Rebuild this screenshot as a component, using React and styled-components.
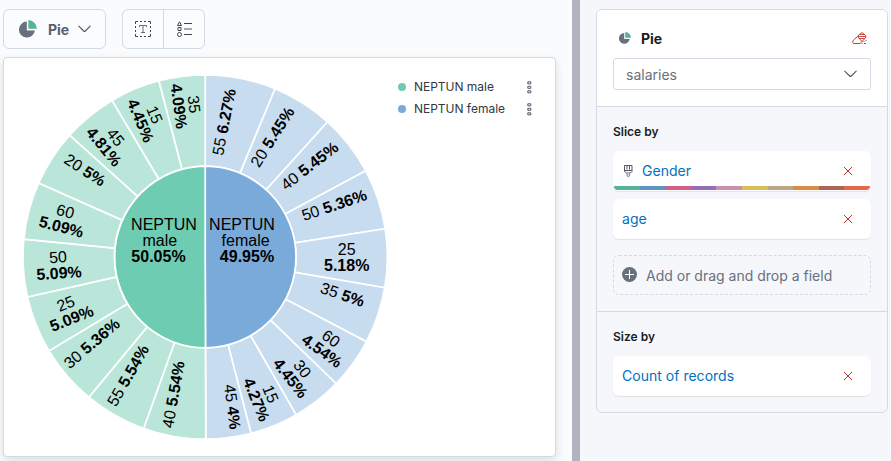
import React from 'react';
import styled, { createGlobalStyle } from 'styled-components';

const GlobalStyle = createGlobalStyle`
  * { box-sizing: border-box; }
  body { margin: 0; overflow: hidden; font-family: Inter, 'Liberation Sans', sans-serif; color: #343741; background: #fafbfd; }
  button { font: inherit; color: inherit; padding: 0; border: 0; background: none; }
  svg { display: block; flex: none; }
`;

const Page = styled.div`
  display: flex;
  width: 891px;
  height: 461px;
  overflow: hidden;
`;
const Workspace = styled.main`
  width: 572px;
  padding: 9px 0 0 3px;
  display: flex;
  flex-direction: column;
  gap: 8px;
  background: #fafbfd;
`;
const Divider = styled.div`
  width: 8px;
  background: #b0b4be;
`;
const Toolbar = styled.div`
  display: flex;
  gap: 16px;
  height: 40px;
`;
const ChartSwitch = styled.button`
  display: flex;
  align-items: center;
  width: 103px;
  height: 40px;
  padding: 0 14px 0 15px;
  border: 1px solid #d3dae6;
  border-radius: 6px;
  background: #fbfcfd;
  font-size: 14px;
  font-weight: 700;
  color: #5a606b;
  span { margin: 1px 9px 0 11px; width: 22px; text-align: left; }
`;
const ButtonGroup = styled.div`
  display: flex;
  width: 83px;
  height: 40px;
  border: 1px solid #d3dae6;
  border-radius: 6px;
  background: #fbfcfd;
`;
const IconButton = styled.button`
  flex: 1;
  display: flex;
  align-items: center;
  justify-content: center;
  & + & { border-left: 1px solid #d3dae6; }
`;
const ChartCard = styled.section`
  display: flex;
  width: 553px;
  height: 400px;
  border: 1px solid #d3dae6;
  border-radius: 4px;
  background: #fff;
  box-shadow: 0 3px 8px rgba(0, 0, 0, 0.07), 0 6px 14px rgba(0, 0, 0, 0.05);
`;
const Legend = styled.ul`
  list-style: none;
  margin: 18px 0 0 4px;
  padding: 0;
  width: 140px;
`;
const LegendItem = styled.li`
  display: flex;
  align-items: center;
  height: 22px;
  font-size: 12px;
  line-height: 22px;
  white-space: nowrap;
  letter-spacing: -0.02px;
  i { width: 8px; height: 8px; border-radius: 50%; background: ${(p) => p.$color}; margin-right: 8px; }
  span { width: 113px; }
`;
const Sidebar = styled.aside`
  width: 311px;
  padding: 9px 3px 0 16px;
  background: #f5f7fb;
`;
const Panel = styled.div`
  height: 404px;
  border: 1px solid #d3dae6;
  border-radius: 6px;
  overflow: hidden;
`;
const PanelHead = styled.header`
  height: 97px;
  padding: 18px 16px 0;
  background: #fff;
  border-bottom: 1px solid #d3dae6;
`;
const PanelTitle = styled.div`
  display: flex;
  align-items: center;
  height: 20px;
  padding: 0 4px 0 6px;
  margin-bottom: 10px;
  font-size: 14px;
  font-weight: 700;
  color: #1a1c21;
  span { flex: 1; margin: 1px 0 0 10px; }
`;
const Select = styled.button`
  display: flex;
  align-items: center;
  justify-content: space-between;
  width: 258px;
  height: 32px;
  padding: 0 13px 0 12px;
  border: 1px solid #d3dae6;
  border-radius: 3px;
  font-size: 14px;
  color: #69707d;
  span { margin-top: 1px; }
`;
const Section = styled.section`
  height: ${(p) => p.$height}px;
  padding: 17px 16px 0;
  & + & { border-top: 1px solid #d3dae6; }
`;
const SectionTitle = styled.h3`
  margin: 0 0 11px;
  font-size: 12px;
  font-weight: 600;
  line-height: 16px;
  color: #1a1c21;
`;
const Field = styled.div`
  display: flex;
  flex-direction: column;
  width: 258px;
  height: 40px;
  margin-bottom: 8px;
  border-radius: 6px;
  background: #fff;
  overflow: hidden;
  box-shadow: 0 1px 1px rgba(0, 0, 0, 0.09);
`;
const FieldBody = styled.div`
  display: flex;
  align-items: center;
  flex: 0 0 40px;
  padding: 0 18px 0 9px;
  font-size: 14px;
  line-height: 20px;
  letter-spacing: 0.02px;
  color: #0071c2;
  span { flex: 1; padding-bottom: 1px; }
`;
const FieldIcon = styled.div`
  width: 20px;
  padding-left: 2px;
`;
const Palette = styled.div`
  display: flex;
  height: 4px;
  margin: -5px 1px 0;
  border-radius: 0 0 5px 5px;
  overflow: hidden;
  flex: none;
`;
const Swatch = styled.i`
  flex: 1;
  background: ${(p) => p.$color};
`;
const DropZone = styled.button`
  display: flex;
  align-items: center;
  width: 258px;
  height: 40px;
  margin-top: 16px;
  padding-left: 8px;
  border: 1px dashed #d3dae6;
  border-radius: 6px;
  font-size: 14px;
  color: #69707d;
  svg { margin-bottom: 2px; }
  span { margin: 1px 0 0 9px; }
`;
const SliceLabel = styled.text`
  font-family: 'Liberation Sans', Arial, sans-serif;
  font-size: 16px;
  fill: #000;
  text-anchor: middle;
  tspan.value { font-weight: 700; }
`;

const CX = 205.2;
const CY = 257;
const INNER = 90.8;
const OUTER = 182.2;

const groups = [
  {
    name: 'NEPTUN', sub: 'female', value: '49.95%', total: 49.95, color: '#79aad9', light: '#c8dcef', x: 242,
    slices: [
      ['55', 6.27, -78.7, 224, 122], ['20', 5.45, -57.6, 272.3, 137], ['40', 5.45, -38, 309.5, 165.8],
      ['50', 5.36, -18.5, 334.2, 205], ['25', 5.18, 0, 346.7, 257.6, 1], ['35', 5, 18.8, 342.5, 294.5],
      ['60', 4.54, 35.9, 326.5, 344.6, 1], ['30', 4.45, 52.1, 296.5, 373.5, 1], ['15', 4.27, 67.8, 263.6, 396.8, 1],
      ['45', 4, 82.7, 232.5, 406.7],
    ],
  },
  {
    name: 'NEPTUN', sub: 'male', value: '50.05%', total: 50.05, color: '#6dccb1', light: '#bae6d9', x: 164,
    slices: [
      ['40', 5.54, -80.2, 173.3, 394.6], ['55', 5.54, -60.2, 128, 375.4], ['30', 5.36, -40.6, 91.7, 343.3],
      ['25', 5.09, -21.8, 68.6, 311, 1], ['50', 5.09, -3.5, 58.5, 265, 1], ['60', 5.09, 14.8, 63.3, 219, 1],
      ['20', 5, 33, 85, 170], ['45', 4.81, 50.6, 109.8, 141.9, 1], ['15', 4.45, 67.3, 147.6, 117.6, 1],
      ['35', 4.09, 82.6, 186.6, 105.2, 1],
    ],
  },
];

const point = (r, deg) => {
  const a = (deg * Math.PI) / 180;
  return `${CX + r * Math.sin(a)} ${CY - r * Math.cos(a)}`;
};
const ring = (r0, r1, a0, a1) =>
  `M${point(r0, a0)} L${point(r1, a0)} A${r1} ${r1} 0 0 1 ${point(r1, a1)} L${point(r0, a1)} A${r0} ${r0} 0 0 0 ${point(r0, a0)}Z`;
const wedge = (r, a0, a1) => `M${CX} ${CY} L${point(r, a0)} A${r} ${r} 0 0 1 ${point(r, a1)}Z`;

function PieChart() {
  const shapes = [];
  const labels = [];
  let start = 0;
  groups.forEach((g) => {
    const groupSpan = g.total * 3.6;
    let a = start;
    const sum = g.slices.reduce((t, s) => t + s[1], 0);
    g.slices.forEach(([age, pct, rot, x, y, stacked]) => {
      const end = a + (pct / sum) * groupSpan;
      const key = g.sub + age;
      const gap = rot > 20 ? 15.2 : 16;
      shapes.push(<path key={key} d={ring(INNER, OUTER, a, end)} fill={g.light} />);
      labels.push(
        <SliceLabel key={key} transform={`translate(${x} ${y}) rotate(${rot})`}>
          {stacked ? (
            <>
              <tspan x="0" y={5.6 - gap / 2}>{age}</tspan>
              <tspan x="0" y={5.6 + gap / 2} className="value">{pct}%</tspan>
            </>
          ) : (
            <>
              <tspan x="0" y="5.6">{age} </tspan>
              <tspan className="value">{pct}%</tspan>
            </>
          )}
        </SliceLabel>
      );
      a = end;
    });
    shapes.push(<path key={g.sub} d={wedge(INNER, start, start + groupSpan)} fill={g.color} />);
    labels.push(
      <SliceLabel key={g.sub}>
        <tspan x={g.x} y="230">{g.name}</tspan>
        <tspan x={g.sub === 'male' ? 159.8 : 245.6} y="246">{g.sub}</tspan>
        <tspan x={g.sub === 'male' ? 158.5 : 247} y="262" className="value">{g.value}</tspan>
      </SliceLabel>
    );
    start += groupSpan;
  });
  return (
    <svg width="390" height="398" viewBox="4 58 390 398" role="img" aria-label="Pie chart">
      <g stroke="#fff" strokeWidth="1.7">{shapes}</g>
      {labels}
    </svg>
  );
}

const PieIcon = ({ size }) => (
  <svg width={size} height={size} viewBox="0 0 18 18">
    <path d="M7.8 1.6a8 8 0 1 0 8.1 9H7.8Z" fill="#69707d" />
    <path d="M9.4 0a8.6 8.6 0 0 1 8.4 8.8H9.4Z" fill="#54b399" />
  </svg>
);
const Chevron = () => (
  <svg width="13" height="8" viewBox="0 0 13 8" fill="none" stroke="#535966" strokeWidth="1.1" strokeLinecap="round">
    <path d="M.8 1.1 5.7 6q.8.8 1.6 0l4.9-4.9" />
  </svg>
);
const TextIcon = () => (
  <svg width="16" height="16" viewBox="0 0 16 16" fill="none" stroke="#404651">
    <path d="M.5 3V.5H3M5 .5h2M9 .5h2M13 .5h2.5V3M15.5 5v2M15.5 9v2M15.5 13v2.500H13M11 15.500H9M7 15.500H5M3 15.500H.5V13M.5 11V9M.5 7V5" />
    <path d="M4.500 6V4.500h7V6M8 4.500v7M6 11.500h4" stroke="#69707d" />
  </svg>
);
const ListIcon = () => (
  <svg width="17" height="16" viewBox="0 0 17 16" fill="none" stroke="#404651">
    <path d="M3.500.8 5.500 4.500h-4ZM2 6.500h3v3H2Z" />
    <circle cx="3.500" cy="13.500" r="2" />
    <path d="M8 2.500h8M8 13.500h8" />
    <path d="M8 8h8" strokeWidth="2" stroke="#a5abb3" />
  </svg>
);
const MenuDots = () => (
  <svg width="5" height="13" viewBox="0 0 5 13" fill="none" stroke="#535966">
    <path d="M.8.8h3v2h-3ZM.8 5.300h3v2h-3ZM.8 9.800h3v2h-3Z" />
  </svg>
);
const EraserIcon = () => (
  <svg width="15" height="13" viewBox="0 0 15 13" fill="none" stroke="#bd271e" strokeWidth=".9">
    <path d="M5.500 4.500 1.300 8.300Q-.4 10.500 1.500 11.500H8L10 9.500M5.500 4.500 8.300 1.500Q9.800 0 11.300 1.300L13.500 3.700Q14.600 5.200 13 6.300L10 9.500Z" />
    <path d="M7.500 2.500h5M6 4.500h8M7 6.500h6" strokeWidth=".8" />
    <path d="M9.500 11.500h1M12 11.500h2M11.500 9.500h1M13.500 8.500h1" />
  </svg>
);
const Cross = () => (
  <svg width="10" height="10" viewBox="0 0 10 10" stroke="#bd271e" strokeWidth=".95" strokeLinecap="round">
    <path d="m1.200 1.200 7.600 7.600M8.800 1.200 1.200 8.800" />
  </svg>
);
const BrushIcon = () => (
  <svg width="9" height="13" viewBox="0 0 9 13" fill="none" stroke="#535966">
    <path d="M.5.500h7.500v6L6.500 8h-4L.5 6.500ZM.5 5.500H8M3 .5v4M5.500.5v4" />
    <path d="M3 8v3q1.300 1.300 2.600 0V8" fill="#d3d6db" stroke="#8b9099" />
  </svg>
);
const PlusIcon = () => (
  <svg width="15" height="15" viewBox="0 0 15 15">
    <circle cx="7.500" cy="7.500" r="7.500" fill="#69707d" />
    <path d="M7.500 3v9M3 7.500h9" stroke="#fff" />
  </svg>
);

const palette = ['#54b399', '#6092c0', '#d36086', '#9170b8', '#ca8eae', '#d6bf57', '#b9a888', '#da8b45', '#aa6556', '#e7664c'];

const Dimension = ({ label, colored }) => (
  <Field>
    <FieldBody>
      {colored && <FieldIcon><BrushIcon /></FieldIcon>}
      <span>{label}</span>
      <Cross />
    </FieldBody>
    {colored && <Palette>{palette.map((c) => <Swatch key={c} $color={c} />)}</Palette>}
  </Field>
);

export default function App() {
  return (
    <Page>
      <GlobalStyle />
      <Workspace>
        <Toolbar>
          <ChartSwitch><PieIcon size={18} /><span>Pie</span><Chevron /></ChartSwitch>
          <ButtonGroup>
            <IconButton aria-label="Labels"><TextIcon /></IconButton>
            <IconButton aria-label="Legend"><ListIcon /></IconButton>
          </ButtonGroup>
        </Toolbar>
        <ChartCard>
          <PieChart />
          <Legend>
            <LegendItem $color="#6dccb1"><i /><span>NEPTUN male</span><MenuDots /></LegendItem>
            <LegendItem $color="#79aad9"><i /><span>NEPTUN female</span><MenuDots /></LegendItem>
          </Legend>
        </ChartCard>
      </Workspace>
      <Divider />
      <Sidebar>
        <Panel>
          <PanelHead>
            <PanelTitle><PieIcon size={12} /><span>Pie</span><EraserIcon /></PanelTitle>
            <Select><span>salaries</span><Chevron /></Select>
          </PanelHead>
          <Section $height={204}>
            <SectionTitle>Slice by</SectionTitle>
            <Dimension label="Gender" colored />
            <Dimension label="age" />
            <DropZone><PlusIcon /><span>Add or drag and drop a field</span></DropZone>
          </Section>
          <Section $height={101}>
            <SectionTitle>Size by</SectionTitle>
            <Dimension label="Count of records" />
          </Section>
        </Panel>
      </Sidebar>
    </Page>
  );
}
